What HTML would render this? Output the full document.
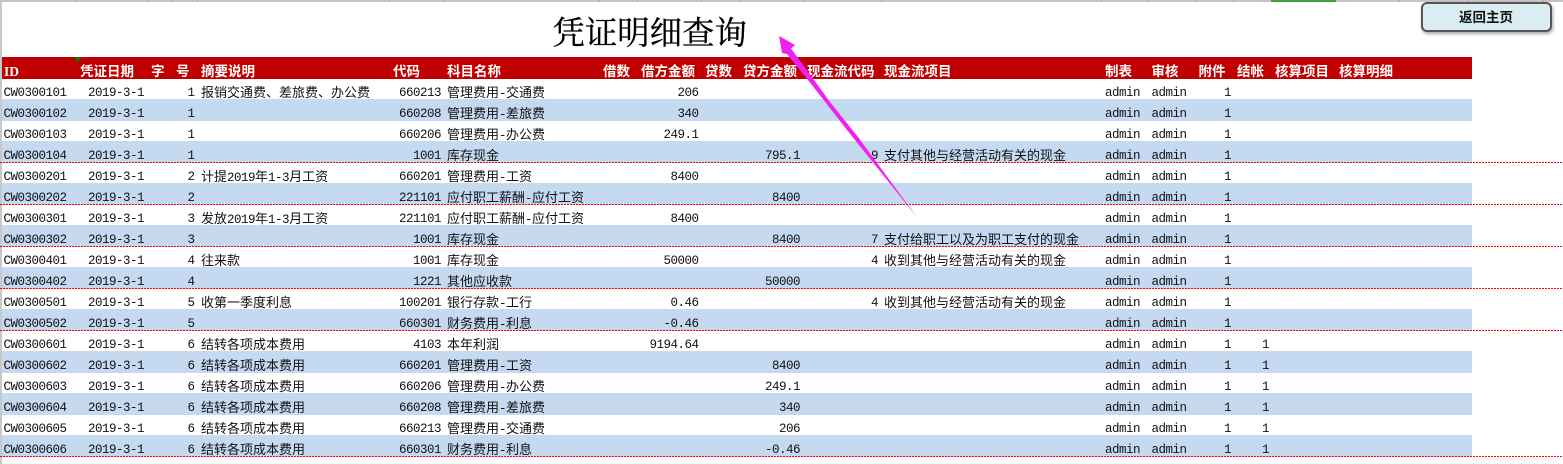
<!DOCTYPE html>
<html lang="zh">
<head>
<meta charset="utf-8">
<title>凭证明细查询</title>
<style>
html,body{margin:0;padding:0;background:#fff;}
#p{position:relative;width:1563px;height:464px;overflow:hidden;background:#fff;font-family:"Liberation Mono","Noto Sans CJK SC",monospace;font-size:12.5px;letter-spacing:-.5px;color:#111;}
#p div,#p span{position:absolute;white-space:nowrap;}
.top{left:0;top:0;width:1563px;height:2px;background:#c4c4c4;}
.lft{left:0;top:0;width:2px;height:464px;background:#c8c8c8;}
.tick{top:0;width:1px;height:2px;background:#a8a8a8;}
.title{left:552.5px;top:12px;font-family:"Liberation Serif","Noto Serif CJK SC",serif;font-size:32.4px;letter-spacing:0;line-height:44px;color:#000;-webkit-text-stroke:.3px #000;}
.btn{left:1421px;top:2px;width:127px;height:26px;background:#daedf3;border:2px solid #555;border-radius:6px;box-shadow:1px 2px 3px rgba(0,0,0,.35);}
.btnt{left:1459px;top:6px;font-family:"Noto Sans CJK SC",sans-serif;font-weight:700;font-size:13.5px;letter-spacing:0;line-height:20px;color:#111;}
.hd{left:2px;top:57px;width:1470px;height:22px;background:#c00000;}
.h{top:62px;line-height:20px;color:#fff;font-family:"Liberation Serif","Noto Sans CJK SC",serif;font-weight:700;font-size:13.5px;letter-spacing:0;}
.tri{left:76px;top:57px;width:0;height:0;border-top:6px solid #008000;border-right:6px solid transparent;}
.bl{left:2px;width:1470px;background:#c5d9f1;}
.da{left:0;width:1563px;height:1px;background:repeating-linear-gradient(90deg,#f00 0 2px,transparent 2px 3px);}
.r{left:0;width:1563px;height:21px;}
.r span{top:1px;line-height:26px;}
.r span.cj{top:2px;font-family:"Liberation Mono","Noto Sans CJK SC",monospace;font-size:13px;letter-spacing:0;}
i{font-style:normal;font-size:12.5px;letter-spacing:-.5px;}
.a{left:3.5px}.b{right:1419px}.c{right:1368.5px}.d{left:201px}.e{right:1122px}.f{left:447px}
.g{right:864.5px}.k{right:763px}.i{right:685px}.j{left:884px}.m{left:1105px}.n{left:1151.5px}.o{right:332px}.q{right:294px}
svg{position:absolute;left:0;top:0;}
</style>
</head>
<body>
<div id="p">
<div class="top"></div><div class="lft"></div>
<div class="tick" style="left:76px"></div><div class="tick" style="left:147px"></div><div class="tick" style="left:172px"></div><div class="tick" style="left:197px"></div><div class="tick" style="left:389px"></div><div class="tick" style="left:443px"></div><div class="tick" style="left:599px"></div><div class="tick" style="left:637px"></div><div class="tick" style="left:701px"></div><div class="tick" style="left:739px"></div><div class="tick" style="left:803px"></div><div class="tick" style="left:881px"></div><div class="tick" style="left:1101px"></div><div class="tick" style="left:1148px"></div><div class="tick" style="left:1195px"></div><div class="tick" style="left:1233px"></div><div class="tick" style="left:1399px"></div><div class="tick" style="left:1468px"></div><div class="tick" style="left:1543px"></div>
<div style="left:1271px;top:0;width:65px;height:2px;background:#43a047"></div>

<div class="title">凭证明细查询</div>
<div class="btn"></div><div class="btnt">返回主页</div>

<div class="hd"></div><div class="tri"></div>
<div class="h" style="left:4px">ID</div><div class="h" style="left:80px">凭证日期</div><div class="h" style="left:151px">字</div><div class="h" style="left:176px">号</div><div class="h" style="left:201px">摘要说明</div><div class="h" style="left:393px">代码</div><div class="h" style="left:447px">科目名称</div><div class="h" style="left:603px">借数</div><div class="h" style="left:641px">借方金额</div><div class="h" style="left:705px">贷数</div><div class="h" style="left:743px">贷方金额</div><div class="h" style="left:807px">现金流代码</div><div class="h" style="left:884px">现金流项目</div><div class="h" style="left:1105px">制表</div><div class="h" style="left:1151.5px">审核</div><div class="h" style="left:1198.5px">附件</div><div class="h" style="left:1237px">结帐</div><div class="h" style="left:1275px">核算项目</div><div class="h" style="left:1339px">核算明细</div>

<div class="bl" style="top:99px;height:22px"></div><div class="bl" style="top:141px;height:22px"></div><div class="bl" style="top:183px;height:22px"></div><div class="bl" style="top:225px;height:22px"></div><div class="bl" style="top:267px;height:22px"></div><div class="bl" style="top:309px;height:22px"></div><div class="bl" style="top:351px;height:22px"></div><div class="bl" style="top:393px;height:22px"></div><div class="bl" style="top:435px;height:22px"></div>

<div class="r" style="top:79px"><span class="a">CW0300101</span><span class="b">2019-3-1</span><span class="c">1</span><span class="d cj">报销交通费、差旅费、办公费</span><span class="e">660213</span><span class="f cj">管理费用<i>-</i>交通费</span><span class="g">206</span><span class="m">admin</span><span class="n">admin</span><span class="o">1</span></div>
<div class="r" style="top:100px"><span class="a">CW0300102</span><span class="b">2019-3-1</span><span class="c">1</span><span class="e">660208</span><span class="f cj">管理费用<i>-</i>差旅费</span><span class="g">340</span><span class="m">admin</span><span class="n">admin</span><span class="o">1</span></div>
<div class="r" style="top:121px"><span class="a">CW0300103</span><span class="b">2019-3-1</span><span class="c">1</span><span class="e">660206</span><span class="f cj">管理费用<i>-</i>办公费</span><span class="g">249.1</span><span class="m">admin</span><span class="n">admin</span><span class="o">1</span></div>
<div class="r" style="top:142px"><span class="a">CW0300104</span><span class="b">2019-3-1</span><span class="c">1</span><span class="e">1001</span><span class="f cj">库存现金</span><span class="k">795.1</span><span class="i">9</span><span class="j cj">支付其他与经营活动有关的现金</span><span class="m">admin</span><span class="n">admin</span><span class="o">1</span></div>
<div class="r" style="top:163px"><span class="a">CW0300201</span><span class="b">2019-3-1</span><span class="c">2</span><span class="d cj">计提<i>2019</i>年<i>1-3</i>月工资</span><span class="e">660201</span><span class="f cj">管理费用<i>-</i>工资</span><span class="g">8400</span><span class="m">admin</span><span class="n">admin</span><span class="o">1</span></div>
<div class="r" style="top:184px"><span class="a">CW0300202</span><span class="b">2019-3-1</span><span class="c">2</span><span class="e">221101</span><span class="f cj">应付职工薪酬<i>-</i>应付工资</span><span class="k">8400</span><span class="m">admin</span><span class="n">admin</span><span class="o">1</span></div>
<div class="r" style="top:205px"><span class="a">CW0300301</span><span class="b">2019-3-1</span><span class="c">3</span><span class="d cj">发放<i>2019</i>年<i>1-3</i>月工资</span><span class="e">221101</span><span class="f cj">应付职工薪酬<i>-</i>应付工资</span><span class="g">8400</span><span class="m">admin</span><span class="n">admin</span><span class="o">1</span></div>
<div class="r" style="top:226px"><span class="a">CW0300302</span><span class="b">2019-3-1</span><span class="c">3</span><span class="e">1001</span><span class="f cj">库存现金</span><span class="k">8400</span><span class="i">7</span><span class="j cj">支付给职工以及为职工支付的现金</span><span class="m">admin</span><span class="n">admin</span><span class="o">1</span></div>
<div class="r" style="top:247px"><span class="a">CW0300401</span><span class="b">2019-3-1</span><span class="c">4</span><span class="d cj">往来款</span><span class="e">1001</span><span class="f cj">库存现金</span><span class="g">50000</span><span class="i">4</span><span class="j cj">收到其他与经营活动有关的现金</span><span class="m">admin</span><span class="n">admin</span><span class="o">1</span></div>
<div class="r" style="top:268px"><span class="a">CW0300402</span><span class="b">2019-3-1</span><span class="c">4</span><span class="e">1221</span><span class="f cj">其他应收款</span><span class="k">50000</span><span class="m">admin</span><span class="n">admin</span><span class="o">1</span></div>
<div class="r" style="top:289px"><span class="a">CW0300501</span><span class="b">2019-3-1</span><span class="c">5</span><span class="d cj">收第一季度利息</span><span class="e">100201</span><span class="f cj">银行存款<i>-</i>工行</span><span class="g">0.46</span><span class="i">4</span><span class="j cj">收到其他与经营活动有关的现金</span><span class="m">admin</span><span class="n">admin</span><span class="o">1</span></div>
<div class="r" style="top:310px"><span class="a">CW0300502</span><span class="b">2019-3-1</span><span class="c">5</span><span class="e">660301</span><span class="f cj">财务费用<i>-</i>利息</span><span class="g">-0.46</span><span class="m">admin</span><span class="n">admin</span><span class="o">1</span></div>
<div class="r" style="top:331px"><span class="a">CW0300601</span><span class="b">2019-3-1</span><span class="c">6</span><span class="d cj">结转各项成本费用</span><span class="e">4103</span><span class="f cj">本年利润</span><span class="g">9194.64</span><span class="m">admin</span><span class="n">admin</span><span class="o">1</span><span class="q">1</span></div>
<div class="r" style="top:352px"><span class="a">CW0300602</span><span class="b">2019-3-1</span><span class="c">6</span><span class="d cj">结转各项成本费用</span><span class="e">660201</span><span class="f cj">管理费用<i>-</i>工资</span><span class="k">8400</span><span class="m">admin</span><span class="n">admin</span><span class="o">1</span><span class="q">1</span></div>
<div class="r" style="top:373px"><span class="a">CW0300603</span><span class="b">2019-3-1</span><span class="c">6</span><span class="d cj">结转各项成本费用</span><span class="e">660206</span><span class="f cj">管理费用<i>-</i>办公费</span><span class="k">249.1</span><span class="m">admin</span><span class="n">admin</span><span class="o">1</span><span class="q">1</span></div>
<div class="r" style="top:394px"><span class="a">CW0300604</span><span class="b">2019-3-1</span><span class="c">6</span><span class="d cj">结转各项成本费用</span><span class="e">660208</span><span class="f cj">管理费用<i>-</i>差旅费</span><span class="k">340</span><span class="m">admin</span><span class="n">admin</span><span class="o">1</span><span class="q">1</span></div>
<div class="r" style="top:415px"><span class="a">CW0300605</span><span class="b">2019-3-1</span><span class="c">6</span><span class="d cj">结转各项成本费用</span><span class="e">660213</span><span class="f cj">管理费用<i>-</i>交通费</span><span class="k">206</span><span class="m">admin</span><span class="n">admin</span><span class="o">1</span><span class="q">1</span></div>
<div class="r" style="top:436px"><span class="a">CW0300606</span><span class="b">2019-3-1</span><span class="c">6</span><span class="d cj">结转各项成本费用</span><span class="e">660301</span><span class="f cj">财务费用<i>-</i>利息</span><span class="k">-0.46</span><span class="m">admin</span><span class="n">admin</span><span class="o">1</span><span class="q">1</span></div>

<div class="da" style="top:162px"></div><div class="da" style="top:204px"></div><div class="da" style="top:246px"></div><div class="da" style="top:288px"></div><div class="da" style="top:330px"></div><div class="da" style="top:456px"></div>

<svg width="1563" height="464" viewBox="0 0 1563 464"><polygon points="779,36 795,45 791,48.5 830,102 858,137 917.5,218 847,130 812,85 787,54 782,53" fill="#f020f0"/></svg>
</div>
</body>
</html>
